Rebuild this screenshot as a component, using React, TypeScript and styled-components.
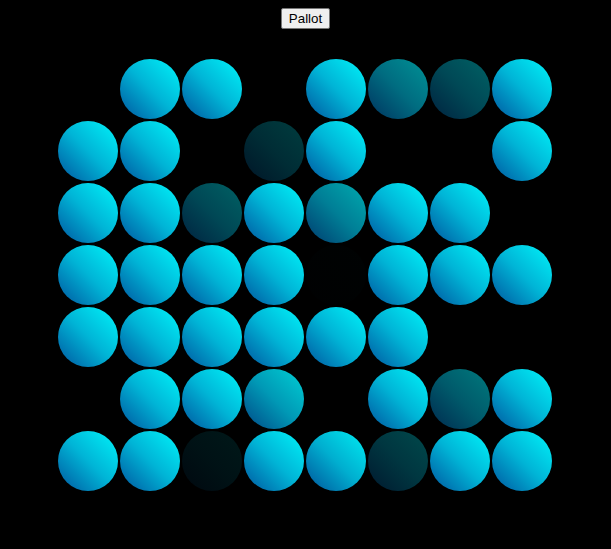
import React from "react";
import styled, { createGlobalStyle } from "styled-components";

const Global = createGlobalStyle`
  html, body { background: #000; }
  body { margin: 8px; font-family: "Liberation Sans", Arial, sans-serif; }
`;

const Page = styled.div`
  display: flex;
  flex-direction: column;
  align-items: center;
`;

const Button = styled.button`
  font-family: "Liberation Sans", Arial, sans-serif;
  font-size: 13.33px;
  height: 21px;
  padding: 1px 7px;
  background: #efefef;
  color: #000;
  border: 1px solid #767676;
  border-radius: 2px;
`;

const Grid = styled.div`
  margin-top: 29px;
  display: grid;
  grid-template-columns: repeat(8, 62px);
  grid-auto-rows: 62px;
  margin-left: -1px;
`;

const Cell = styled.div`
  display: flex;
  align-items: center;
  justify-content: center;
`;

const Dot = styled.div<{ $o: number }>`
  width: 60px;
  height: 60px;
  border-radius: 50%;
  background: linear-gradient(45deg, #00559e, #00b4d6 50%, #00f4fa);
  opacity: ${(p) => p.$o};
`;

const data: number[][] = [
  [0, 1, 1, 0, 1, 0.6, 0.4, 1],
  [1, 1, 0, 0.25, 1, 0, 0, 1],
  [1, 1, 0.4, 1, 0.7, 1, 1, 0],
  [1, 1, 1, 1, 0.01, 1, 1, 1],
  [1, 1, 1, 1, 1, 1, 0, 0],
  [0, 1, 1, 0.85, 0, 1, 0.5, 1],
  [1, 1, 0.1, 1, 0.97, 0.3, 1, 1],
];

export default function App() {
  return (
    <Page>
      <Global />
      <Button>Pallot</Button>
      <Grid>
        {data.flatMap((row, r) =>
          row.map((o, c) => (
            <Cell key={`${r}-${c}`}>
              <Dot $o={o} />
            </Cell>
          ))
        )}
      </Grid>
    </Page>
  );
}
